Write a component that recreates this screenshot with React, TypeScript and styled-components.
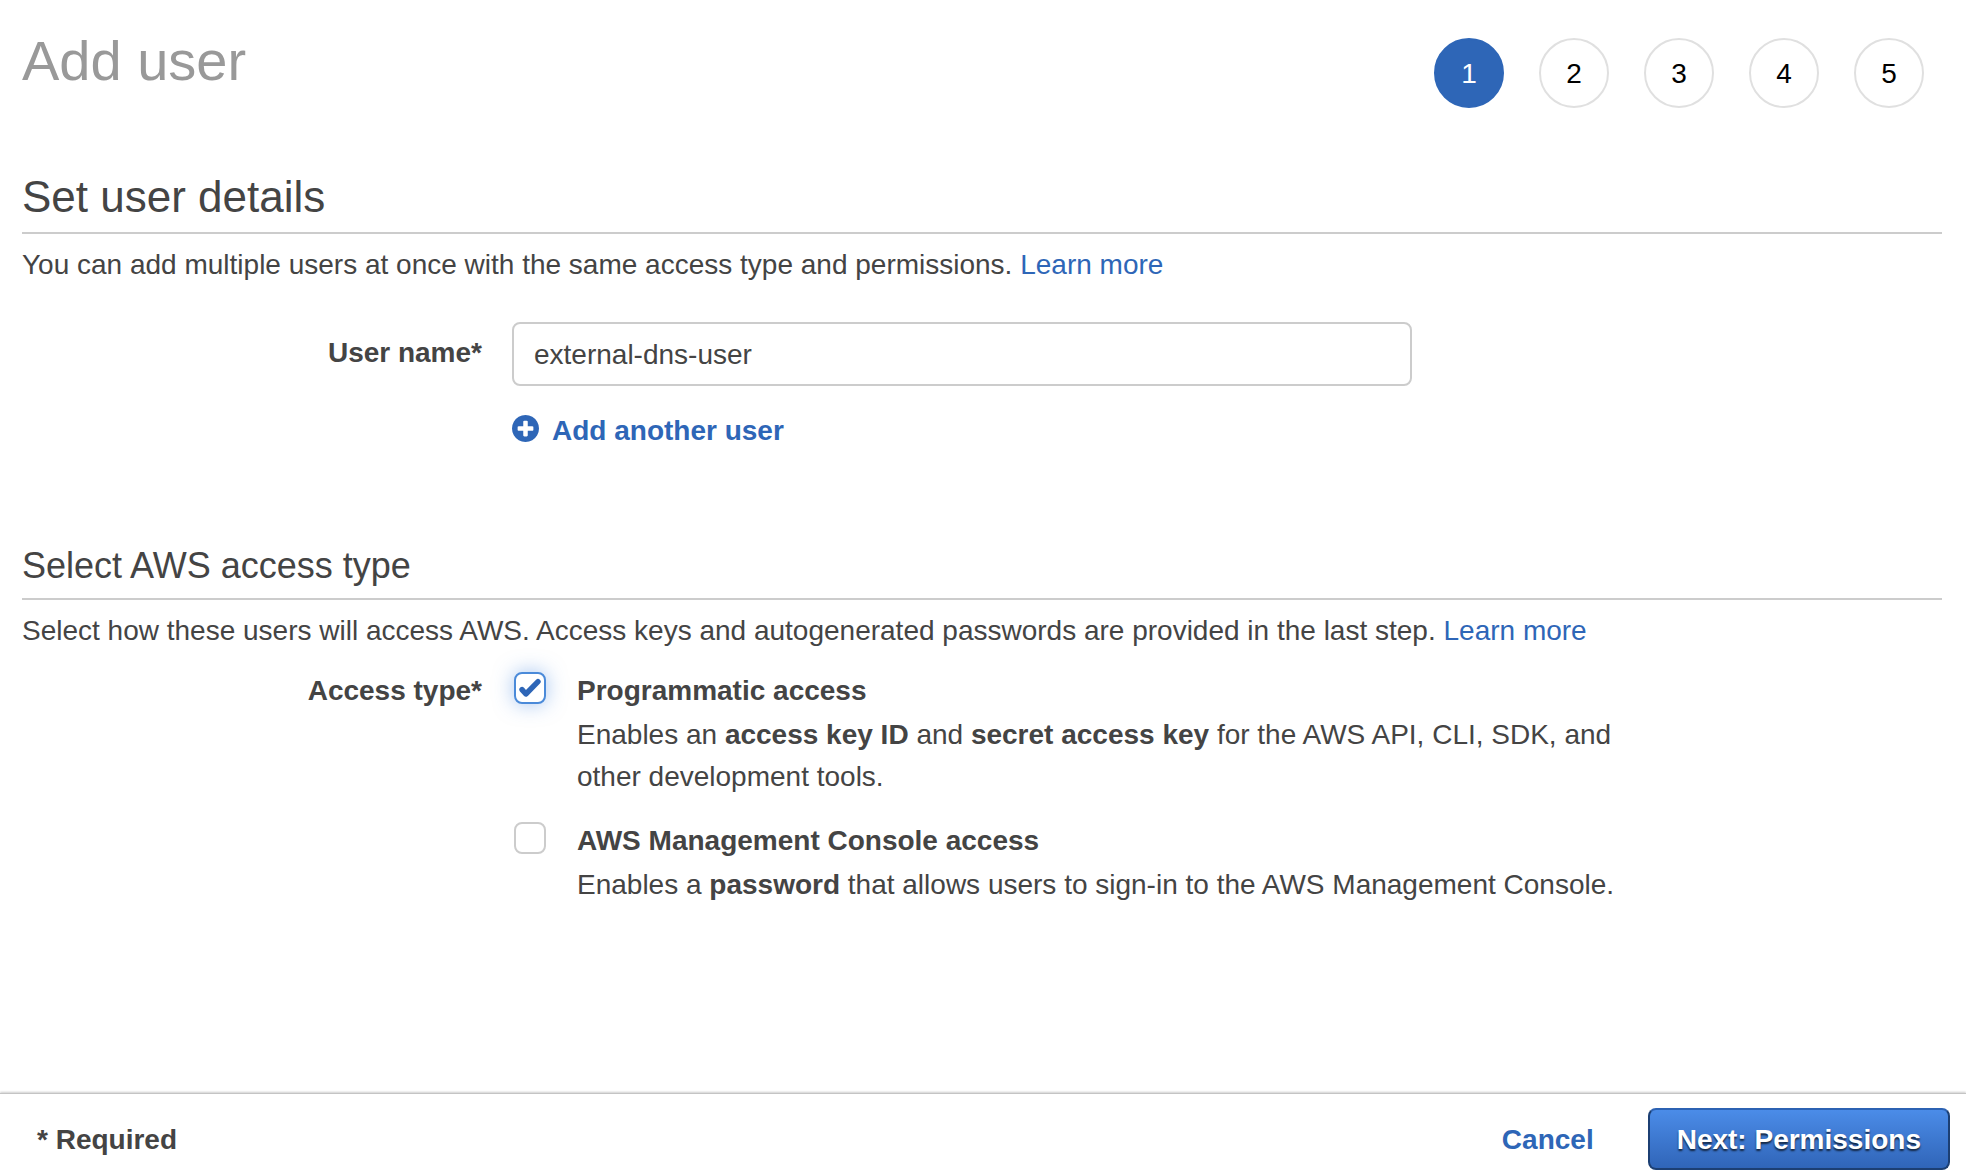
import React, { useState } from "react";
import styled, { createGlobalStyle } from "styled-components";

const GlobalStyle = createGlobalStyle`
  *, *::before, *::after { box-sizing: border-box; }
  body {
    margin: 0;
    background: #fff;
    color: #444;
    font-family: "Liberation Sans", Arial, Helvetica, sans-serif;
    font-size: 28px;
    line-height: 42px;
  }
  h1, h2, h3, p, ol { margin: 0; padding: 0; font-weight: 400; }
`;

const Page = styled.div`
  display: flex;
  flex-direction: column;
  min-height: 100vh;
`;

const Main = styled.main`
  flex: 1;
  padding: 29px 24px 40px 22px;
`;

const Header = styled.header`
  display: flex;
  justify-content: space-between;
  align-items: flex-start;
  margin-bottom: 62px;
`;

const PageTitle = styled.h1`
  color: #999;
  font-size: 56px;
  line-height: 64px;
`;

const Steps = styled.ol`
  && {
    display: flex;
    gap: 35px;
    padding: 9px 18px 0 0;
    list-style: none;
  }
`;

const Step = styled.li<{ $active: boolean }>`
  display: flex;
  align-items: center;
  justify-content: center;
  width: 70px;
  height: 70px;
  padding-top: 2px;
  border: 2px solid ${(p) => (p.$active ? "#2e66b7" : "#e0e0e0")};
  border-radius: 50%;
  background: ${(p) => (p.$active ? "#2e66b7" : "#fff")};
  color: ${(p) => (p.$active ? "#fff" : "#000")};
`;

const Section = styled.section`
  & + & {
    margin-top: 92px;
  }
`;

const SectionTitle = styled.h2`
  padding-bottom: 8px;
  border-bottom: 2px solid #ccc;
  font-size: 44px;
  line-height: 54px;
`;

const SubsectionTitle = styled.h3`
  padding-bottom: 10px;
  border-bottom: 2px solid #ccc;
  font-size: 36px;
  line-height: 44px;
`;

const Intro = styled.p`
  && {
    margin-top: 10px;
  }
`;

const Link = styled.a`
  color: #2e66b7;
  text-decoration: none;
`;

const FormRow = styled.div<{ $gapTop: number }>`
  display: grid;
  grid-template-columns: 46fr 143fr;
  column-gap: 30px;
  margin-top: ${(p) => p.$gapTop}px;
`;

const FieldLabel = styled.label`
  padding-top: 10px;
  font-weight: 700;
  text-align: right;
`;

const GroupLabel = styled.span`
  font-weight: 700;
  text-align: right;
`;

const TextInput = styled.input`
  display: block;
  width: 100%;
  max-width: 900px;
  height: 64px;
  padding: 2px 20px 0;
  border: 2px solid #ccc;
  border-radius: 8px;
  background: #fff;
  color: #444;
  font: inherit;
  outline: none;
`;

const AddButton = styled.button`
  display: flex;
  align-items: center;
  gap: 13px;
  margin: 24px 0 0;
  padding: 0;
  border: 0;
  background: none;
  color: #2e66b7;
  font: inherit;
  font-weight: 700;
  cursor: pointer;
`;

const PlusIcon = styled.svg`
  display: block;
  width: 27px;
  height: 33px;
  padding-bottom: 6px;
  fill: currentColor;
`;

const Options = styled.div`
  display: flex;
  flex-direction: column;
  gap: 22px;
  max-width: 1160px;
`;

const Option = styled.div`
  display: grid;
  grid-template-columns: 32px 1fr;
  column-gap: 31px;
  padding-left: 2px;
`;

const CheckSlot = styled.span`
  display: grid;
  width: 32px;
  height: 32px;
  margin-top: 2px;

  > * {
    grid-area: 1 / 1;
  }
`;

const Checkbox = styled.input`
  appearance: none;
  width: 32px;
  height: 32px;
  margin: 0;
  border: 2px solid #ccc;
  border-radius: 8px;
  background: #fff;
  cursor: pointer;

  &:checked {
    border-color: #4a8ad9;
    box-shadow: 0 0 20px rgba(74, 138, 226, 0.5);
  }
`;

const CheckMark = styled.svg`
  width: 32px;
  height: 32px;
  fill: none;
  stroke: #2e66b7;
  stroke-width: 5.4;
  stroke-linecap: round;
  stroke-linejoin: round;
  pointer-events: none;
`;

const OptionLabel = styled.label`
  display: block;
  margin-bottom: 2px;
  font-weight: 700;
`;

const Footer = styled.footer`
  display: flex;
  align-items: baseline;
  gap: 54px;
  padding: 14px 16px 4px 37px;
  border-top: 1px solid #c4c4c4;
  box-shadow: 0 -1px 2px rgba(0, 0, 0, 0.2);
`;

const Required = styled.span`
  margin-right: auto;
  font-weight: 700;
`;

const CancelButton = styled.button`
  padding: 0;
  border: 0;
  background: none;
  color: #2e66b7;
  font: inherit;
  font-weight: 700;
  cursor: pointer;
`;

const NextButton = styled.button`
  padding: 9px 27px 7px;
  border: 2px solid #1c3f73;
  border-top-color: #2c62b3;
  border-radius: 8px;
  background: linear-gradient(#4b8ce8, #3065b8);
  color: #fff;
  font: inherit;
  font-weight: 700;
  text-shadow: 0 2px 2px rgba(0, 0, 0, 0.7);
  cursor: pointer;
`;

const steps = [1, 2, 3, 4, 5];

interface AccessOptionProps {
  id: string;
  title: string;
  initial: boolean;
  children: React.ReactNode;
}

function AccessOption({ id, title, initial, children }: AccessOptionProps) {
  const [checked, setChecked] = useState(initial);
  return (
    <Option>
      <CheckSlot>
        <Checkbox
          type="checkbox"
          id={id}
          checked={checked}
          aria-describedby={`${id}-hint`}
          onChange={(e) => setChecked(e.target.checked)}
        />
        {checked && (
          <CheckMark viewBox="0 0 32 32" aria-hidden="true">
            <path d="M8 17.6L11.9 22L24 9.7" />
          </CheckMark>
        )}
      </CheckSlot>
      <div>
        <OptionLabel htmlFor={id}>{title}</OptionLabel>
        <p id={`${id}-hint`}>{children}</p>
      </div>
    </Option>
  );
}

export default function App() {
  const [name, setName] = useState("external-dns-user");
  return (
    <Page>
      <GlobalStyle />
      <Main>
        <Header>
          <PageTitle>Add user</PageTitle>
          <Steps>
            {steps.map((n) => (
              <Step key={n} $active={n === 1} aria-current={n === 1 ? "step" : undefined}>
                {n}
              </Step>
            ))}
          </Steps>
        </Header>

        <Section>
          <SectionTitle>Set user details</SectionTitle>
          <Intro>
            You can add multiple users at once with the same access type and permissions.{" "}
            <Link href="#users">Learn more</Link>
          </Intro>
          <FormRow $gapTop={36}>
            <FieldLabel htmlFor="user-name">User name*</FieldLabel>
            <div>
              <TextInput
                id="user-name"
                type="text"
                value={name}
                onChange={(e) => setName(e.target.value)}
              />
              <AddButton type="button">
                <PlusIcon viewBox="128 128 1536 1536" aria-hidden="true">
                  <path d="M1344 960v-128q0-26-19-45t-45-19h-256v-256q0-26-19-45t-45-19h-128q-26 0-45 19t-19 45v256h-256q-26 0-45 19t-19 45v128q0 26 19 45t45 19h256v256q0 26 19 45t45 19h128q26 0 45-19t19-45v-256h256q26 0 45-19t19-45zm320-64q0 209-103 385.5t-279.5 279.5-385.5 103-385.5-103-279.5-279.5-103-385.5 103-385.5 279.5-279.5 385.5-103 385.5 103 279.5 279.5 103 385.5z" />
                </PlusIcon>
                Add another user
              </AddButton>
            </div>
          </FormRow>
        </Section>

        <Section>
          <SubsectionTitle>Select AWS access type</SubsectionTitle>
          <Intro>
            Select how these users will access AWS. Access keys and autogenerated passwords are
            provided in the last step. <Link href="#access">Learn more</Link>
          </Intro>
          <FormRow $gapTop={18} role="group" aria-labelledby="access-type">
            <GroupLabel id="access-type">Access type*</GroupLabel>
            <Options>
              <AccessOption id="programmatic" title="Programmatic access" initial={true}>
                Enables an <b>access key ID</b> and <b>secret access key</b> for the AWS API, CLI,
                SDK, and other development tools.
              </AccessOption>
              <AccessOption id="console" title="AWS Management Console access" initial={false}>
                Enables a <b>password</b> that allows users to sign-in to the AWS Management
                Console.
              </AccessOption>
            </Options>
          </FormRow>
        </Section>
      </Main>

      <Footer>
        <Required>* Required</Required>
        <CancelButton type="button">Cancel</CancelButton>
        <NextButton type="button">Next: Permissions</NextButton>
      </Footer>
    </Page>
  );
}
